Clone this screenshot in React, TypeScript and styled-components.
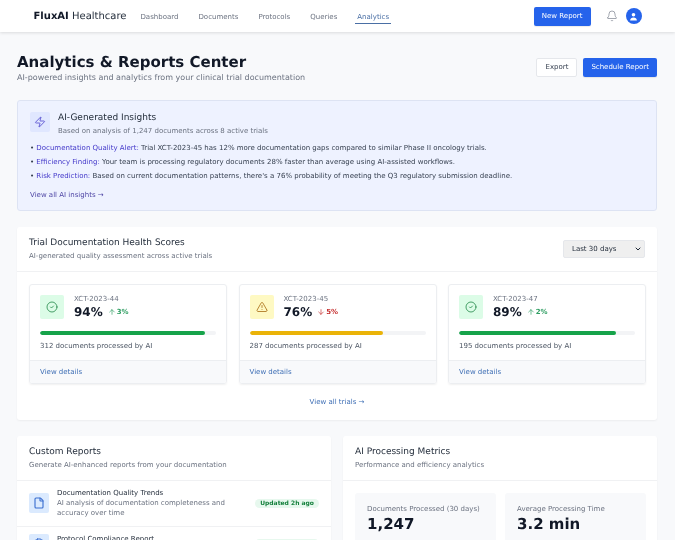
import React from "react";
import styled, { createGlobalStyle } from "styled-components";
import { Bell, Zap, CircleCheck, TriangleAlert, ArrowUp, ArrowDown, File, ClipboardCheck, ChevronDown } from "lucide-react";

const Global = createGlobalStyle`
  html, body { margin: 0; height: 540px; overflow: hidden; background: #f8f9fb; }
  body { font-family: "DejaVu Sans", sans-serif; color: #111827; text-rendering: geometricPrecision; }
  * { box-sizing: border-box; }
`;

const Page = styled.div`filter: blur(0.25px);`;
const Nav = styled.nav`
  height: 32px; background: #fff; box-shadow: 0 1px 3px rgba(0,0,0,.12);
  display: flex; align-items: center; padding: 0 33.5px; position: relative;
`;
const Logo = styled.div`font-size: 10px; color: #1f2937; margin-right: 12px; b { font-weight: 700; color: #111827; }`;
const NavLinks = styled.div`display: flex; gap: 16px; flex: 1;`;
const NavLink = styled.a<{ $active?: boolean }>`
  font-size: 7px; line-height: 10px; color: ${p => (p.$active ? "#4a6fa5" : "#6b7280")}; padding: 1px 2px;
  border-bottom: 1px solid ${p => (p.$active ? "#4a6fa5" : "transparent")};
  margin-top: 2px;
`;
const PrimaryButton = styled.button`
  background: #2563eb; color: #fff; border: 0; border-radius: 2px; font: 7px "DejaVu Sans", sans-serif;
  text-rendering: geometricPrecision; height: 19px; padding: 0 8px; white-space: nowrap; box-shadow: 0 1px 1px rgba(0,0,0,.08);
`;
const NavRight = styled.div`display: flex; align-items: center;`;
const BellWrap = styled.span`display: flex; margin: 0 8px 0 15px; color: #6b7280;`;
const Avatar = styled.span`width: 16px; height: 16px; border-radius: 50%; background: #2563eb; display: flex; align-items: center; justify-content: center;`;

const Main = styled.main`padding: 20px 18px 0 17px;`;
const Header = styled.header`display: flex; justify-content: space-between; align-items: center; height: 32px; margin-bottom: 16px;`;
const Title = styled.h1`margin: 0 0 1px; font-size: 15px; font-weight: 700; line-height: 18px; color: #111827;`;
const Sub = styled.p`margin: 0; font-size: 8px; line-height: 12px; color: #6b7280;`;
const Actions = styled.div`display: flex; gap: 6px; margin-top: -2px;`;
const OutlineButton = styled.button`
  background: #fff; color: #374151; border: 1px solid #e5e7eb; border-radius: 2px; font: 7px "DejaVu Sans", sans-serif;
  text-rendering: geometricPrecision; height: 19px; padding: 0 8px;
`;

const Insights = styled.section`
  height: 111px; background: #eef2ff; border: 1px solid #dde3f3; border-radius: 3px; padding: 11px 12px;
`;
const InsightHead = styled.div`display: flex; gap: 8px; margin-bottom: 5px;`;
const IconTile = styled.div<{ $bg: string; $size?: number; $fg?: string }>`
  width: ${p => p.$size ?? 20}px; height: ${p => p.$size ?? 20}px; border-radius: 2px; background: ${p => p.$bg};
  color: ${p => p.$fg ?? "#4338ca"}; display: flex; align-items: center; justify-content: center; flex: none;
`;
const CardTitle = styled.h3`margin: 0; font-size: 9px; font-weight: 400; line-height: 12px; color: #1f2937;`;
const CardSub = styled.p`margin: 2px 0 0; font-size: 7px; line-height: 10px; color: #6b7280;`;
const List = styled.ul`list-style: none; margin: 0; padding: 0;`;
const ListItem = styled.li`font-size: 7px; line-height: 14px; color: #374151; white-space: nowrap; b { font-weight: 400; color: #4338ca; }`;
const ViewAll = styled.a`display: block; margin-top: 5px; font-size: 7px; line-height: 14px; color: #4f46a5;`;

const Card = styled.section`background: #fff; border-radius: 3px; box-shadow: 0 1px 2px rgba(0,0,0,.05); margin-top: 16px;`;
const CardHeader = styled.div`
  display: flex; justify-content: space-between; align-items: center; height: 45px; padding: 0 12px; border-bottom: 1px solid #f0f1f3;
`;
const Select = styled.div`
  width: 82px; height: 18px; background: #efefef; border: 1px solid #e5e7eb; border-radius: 2px; font-size: 7px;
  display: flex; align-items: center; justify-content: space-between; padding: 0 2px 0 8px; color: #1f2937;
`;
const Trials = styled.div`display: grid; grid-template-columns: repeat(3, 198px); gap: 11.5px; padding: 12px 12px 0;`;
const Trial = styled.article`
  height: 100px; border: 1px solid #eceef1; border-radius: 3px; box-shadow: 0 1px 2px rgba(0,0,0,.06); overflow: hidden;
  display: flex; flex-direction: column;
`;
const TrialBody = styled.div`flex: 1; padding: 10px 10px 0;`;
const TrialTop = styled.div`display: flex; gap: 10px;`;
const TrialId = styled.div`font-size: 7px; line-height: 9px; color: #6b7280;`;
const ScoreRow = styled.div`display: flex; align-items: baseline; gap: 5px; margin-top: 1px;`;
const Score = styled.div`font-size: 12px; font-weight: 700; line-height: 15px; color: #111827;`;
const Delta = styled.span<{ $up: boolean }>`
  font-size: 7px; font-weight: 700; color: ${p => (p.$up ? "#2f9e62" : "#c53030")}; display: inline-flex; align-items: center; gap: 1px;
`;
const Track = styled.div`height: 4px; margin-top: 11px; background: #f3f4f6; border-radius: 2px; overflow: hidden;`;
const Fill = styled.div<{ $c: string }>`height: 100%; background: ${p => p.$c}; border-radius: 2px;`;
const Docs = styled.div`font-size: 7px; line-height: 10px; margin-top: 6px; color: #4b5563;`;
const TrialFoot = styled.a`
  height: 23px; background: #f8f9fb; border-top: 1px solid #eceef1; padding: 0 10px; display: flex; align-items: center; font-size: 7px; color: #3f6fb5;
`;
const CenterLink = styled.a`display: block; text-align: center; height: 36px; line-height: 36px; font-size: 7px; color: #3f6fb5;`;

const Columns = styled.div`display: grid; grid-template-columns: 314px 314px; gap: 12px;`;
const Row = styled.div`display: flex; align-items: center; gap: 8px; padding: 7px 12px 7.5px; border-bottom: 1px solid #f0f1f3;`;
const RowText = styled.div`flex: 1;`;
const RowTitle = styled.div`font-size: 7px; line-height: 10px; color: #1f2937;`;
const RowSub = styled.div`font-size: 7px; line-height: 10px; color: #6b7280;`;
const Badge = styled.span`
  font-size: 6px; line-height: 9px; font-weight: 700; color: #15803d; background: #e7f8ee; border-radius: 5px; padding: 0 5px; white-space: nowrap; margin-left: 8px;
`;
const Metrics = styled.div`display: grid; grid-template-columns: 141px 141px; gap: 9px; padding: 12px 12px;`;
const Metric = styled.div`background: #f8f9fb; border-radius: 3px; height: 80px; padding: 11px 12px;`;
const MetricLabel = styled.div`font-size: 7px; line-height: 10px; color: #6b7280;`;
const MetricValue = styled.div`font-size: 15px; font-weight: 700; line-height: 18px; margin-top: 1px; color: #111827;`;

const trials = [
  { id: "XCT-2023-44", score: 94, d: 3, up: true, docs: 312, c: "#16a34a", bg: "#dcfce7", fg: "#15803d", warn: false },
  { id: "XCT-2023-45", score: 76, d: 5, up: false, docs: 287, c: "#eab308", bg: "#fef9c3", fg: "#a16207", warn: true },
  { id: "XCT-2023-47", score: 89, d: 2, up: true, docs: 195, c: "#16a34a", bg: "#dcfce7", fg: "#15803d", warn: false },
];

export default function App() {
  return (
    <Page>
      <Global />
      <Nav>
        <Logo><b>FluxAI</b> Healthcare</Logo>
        <NavLinks>
          <NavLink>Dashboard</NavLink>
          <NavLink>Documents</NavLink>
          <NavLink>Protocols</NavLink>
          <NavLink>Queries</NavLink>
          <NavLink $active>Analytics</NavLink>
        </NavLinks>
        <NavRight>
          <PrimaryButton>New Report</PrimaryButton>
          <BellWrap><Bell size={12} strokeWidth={1.25} /></BellWrap>
          <Avatar>
            <svg width="9" height="9" viewBox="0 0 20 20" fill="#fff"><circle cx="10" cy="6" r="4" /><path d="M2.5 19c0-4.5 3.4-7 7.5-7s7.5 2.5 7.5 7z" /></svg>
          </Avatar>
        </NavRight>
      </Nav>
      <Main>
        <Header>
          <div>
            <Title>Analytics &amp; Reports Center</Title>
            <Sub>AI-powered insights and analytics from your clinical trial documentation</Sub>
          </div>
          <Actions>
            <OutlineButton>Export</OutlineButton>
            <PrimaryButton>Schedule Report</PrimaryButton>
          </Actions>
        </Header>
        <Insights>
          <InsightHead>
            <IconTile $bg="#e0e7ff"><Zap size={12} strokeWidth={1.5} /></IconTile>
            <div>
              <CardTitle>AI-Generated Insights</CardTitle>
              <CardSub>Based on analysis of 1,247 documents across 8 active trials</CardSub>
            </div>
          </InsightHead>
          <List>
            <ListItem>• <b>Documentation Quality Alert:</b> Trial XCT-2023-45 has 12% more documentation gaps compared to similar Phase II oncology trials.</ListItem>
            <ListItem>• <b>Efficiency Finding:</b> Your team is processing regulatory documents 28% faster than average using AI-assisted workflows.</ListItem>
            <ListItem>• <b>Risk Prediction:</b> Based on current documentation patterns, there's a 76% probability of meeting the Q3 regulatory submission deadline.</ListItem>
          </List>
          <ViewAll>View all AI insights →</ViewAll>
        </Insights>
        <Card>
          <CardHeader>
            <div>
              <CardTitle>Trial Documentation Health Scores</CardTitle>
              <CardSub>AI-generated quality assessment across active trials</CardSub>
            </div>
            <Select>Last 30 days <ChevronDown size={8} strokeWidth={3} /></Select>
          </CardHeader>
          <Trials>
            {trials.map(t => (
              <Trial key={t.id}>
                <TrialBody>
                  <TrialTop>
                    <IconTile $bg={t.bg} $fg={t.fg} $size={24}>
                      {t.warn ? <TriangleAlert size={12} strokeWidth={1.5} /> : <CircleCheck size={12} strokeWidth={1.5} />}
                    </IconTile>
                    <div>
                      <TrialId>{t.id}</TrialId>
                      <ScoreRow>
                        <Score>{t.score}%</Score>
                        <Delta $up={t.up}>
                          {t.up ? <ArrowUp size={8} strokeWidth={2} /> : <ArrowDown size={8} strokeWidth={2} />}{t.d}%
                        </Delta>
                      </ScoreRow>
                    </div>
                  </TrialTop>
                  <Track><Fill $c={t.c} style={{ width: `${t.score}%` }} /></Track>
                  <Docs>{t.docs} documents processed by AI</Docs>
                </TrialBody>
                <TrialFoot>View details</TrialFoot>
              </Trial>
            ))}
          </Trials>
          <CenterLink>View all trials →</CenterLink>
        </Card>
        <Columns>
          <Card>
            <CardHeader>
              <div>
                <CardTitle>Custom Reports</CardTitle>
                <CardSub>Generate AI-enhanced reports from your documentation</CardSub>
              </div>
            </CardHeader>
            <Row>
              <IconTile $bg="#dbeafe" $fg="#3b6fd0"><File size={12} strokeWidth={2.25} /></IconTile>
              <RowText>
                <RowTitle>Documentation Quality Trends</RowTitle>
                <RowSub>AI analysis of documentation completeness and accuracy over time</RowSub>
              </RowText>
              <Badge>Updated 2h ago</Badge>
            </Row>
            <Row>
              <IconTile $bg="#dbeafe" $fg="#3b6fd0"><ClipboardCheck size={12} strokeWidth={2} /></IconTile>
              <RowText>
                <RowTitle>Protocol Compliance Report</RowTitle>
                <RowSub>AI analysis of protocol adherence</RowSub>
              </RowText>
              <Badge>Updated 1d ago</Badge>
            </Row>
          </Card>
          <Card>
            <CardHeader>
              <div>
                <CardTitle>AI Processing Metrics</CardTitle>
                <CardSub>Performance and efficiency analytics</CardSub>
              </div>
            </CardHeader>
            <Metrics>
              <Metric><MetricLabel>Documents Processed (30 days)</MetricLabel><MetricValue>1,247</MetricValue></Metric>
              <Metric><MetricLabel>Average Processing Time</MetricLabel><MetricValue>3.2 min</MetricValue></Metric>
            </Metrics>
          </Card>
        </Columns>
      </Main>
    </Page>
  );
}
